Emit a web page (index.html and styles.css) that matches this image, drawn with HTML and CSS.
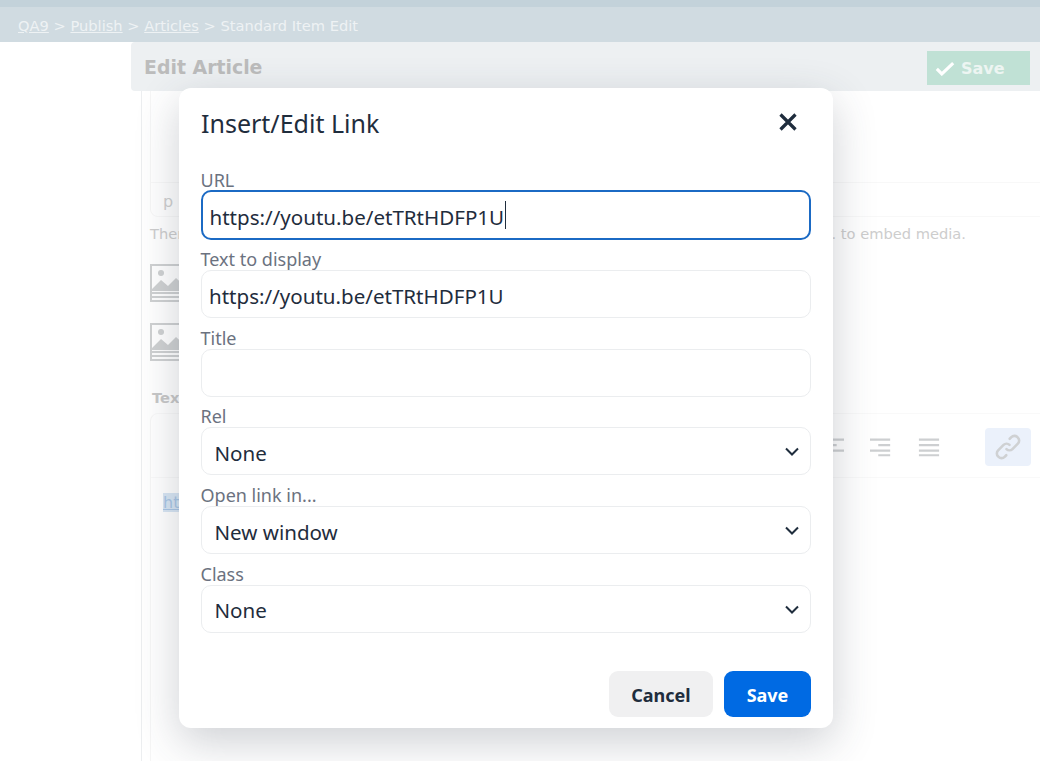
FILE: index.html
```html
<!DOCTYPE html>
<html lang="en">
<head>
<meta charset="utf-8">
<title>Insert/Edit Link</title>
<link rel="stylesheet" href="styles.css">
</head>
<body>
<div class="page">
  <div class="topbar"></div>
  <nav class="crumbs"><a>QA9</a> &gt; <a>Publish</a> &gt; <a>Articles</a> &gt; Standard Item Edit</nav>
  <div class="main">
    <header class="panel-head">
      <h1>Edit Article</h1>
      <div class="bg-save">
        <svg class="bg-check" viewBox="0 0 22 16"><path d="M2 8.5l5.5 5.5L20 2" fill="none" stroke="#fff" stroke-width="3.4"/></svg>
        <span>Save</span>
      </div>
    </header>
    <div class="panel-body">
      <div class="editor-one"><div class="edit-area"></div><div class="status"><span>p</span></div></div>
      <p class="hint"><span>There</span><span>. to embed media.</span></p>
      <div class="thumbs">
        <svg class="thumb" viewBox="0 0 40 40"><rect x="1" y="1" width="38" height="36" fill="none" stroke="#cfd1d2" stroke-width="2"/><circle cx="11" cy="9" r="3" fill="#cfd1d2"/><path d="M2 25l9-9 7 6 8-8 12 11v2H2z" fill="#cfd1d2"/><path d="M2 29h36M2 33h36" stroke="#cfd1d2" stroke-width="2"/></svg>
        <svg class="thumb" viewBox="0 0 40 40"><rect x="1" y="1" width="38" height="36" fill="none" stroke="#cfd1d2" stroke-width="2"/><circle cx="11" cy="9" r="3" fill="#cfd1d2"/><path d="M2 25l9-9 7 6 8-8 12 11v2H2z" fill="#cfd1d2"/><path d="M2 29h36M2 33h36" stroke="#cfd1d2" stroke-width="2"/></svg>
      </div>
      <div class="text-label">Text</div>
      <div class="editor-two">
        <div class="toolbar">
          <svg class="align" viewBox="0 0 24 20"><path d="M0 2h24M0 8h16M0 14h24M0 19h12" stroke="#cdcfd1" stroke-width="2.4"/></svg>
          <svg class="align" viewBox="0 0 24 20"><path d="M0 2h22M9 8h13M0 14h22M9 19h13" stroke="#cdcfd1" stroke-width="2.4"/></svg>
          <svg class="align" viewBox="0 0 24 20"><path d="M1 2h22M1 8h22M1 14h22M1 19h22" stroke="#cdcfd1" stroke-width="2.4"/></svg>
          <div class="link-btn">
            <svg viewBox="0 0 24 24" width="26" height="26" fill="none" stroke="#cfd1d3" stroke-width="2.4" stroke-linecap="round" stroke-linejoin="round"><path d="M13.6 4.4l1.5-1.5a3.9 3.9 0 0 1 5.6 0l.4.4a3.9 3.9 0 0 1 0 5.6l-5 5a3.9 3.9 0 0 1-5.5 0"/><path d="M10.4 19.6l-1.5 1.5a3.9 3.9 0 0 1-5.6 0l-.4-.4a3.9 3.9 0 0 1 0-5.6l5-5a3.9 3.9 0 0 1 5.5 0"/></svg>
          </div>
        </div>
        <div class="doc"><a>htt</a></div>
      </div>
    </div>
  </div>
</div>

<section class="modal">
  <div class="modal-head">
    <h2>Insert/Edit Link</h2>
    <svg class="close" viewBox="0 0 16 16"><path d="M2 2l12 12M14 2L2 14" fill="none" stroke="#1f2d3d" stroke-width="2.6"/></svg>
  </div>
  <form class="form">
    <div class="field"><label>URL</label><div class="input focus">https://youtu.be/etTRtHDFP1U<i class="caret"></i></div></div>
    <div class="field"><label>Text to display</label><div class="input">https://youtu.be/etTRtHDFP1U</div></div>
    <div class="field"><label>Title</label><div class="input"></div></div>
    <div class="field"><label>Rel</label><div class="input select">None<svg class="chev" viewBox="0 0 14 9"><path d="M1 1.5l6 6 6-6" fill="none" stroke="#1f2d3d" stroke-width="2"/></svg></div></div>
    <div class="field"><label>Open link in...</label><div class="input select">New window<svg class="chev" viewBox="0 0 14 9"><path d="M1 1.5l6 6 6-6" fill="none" stroke="#1f2d3d" stroke-width="2"/></svg></div></div>
    <div class="field"><label>Class</label><div class="input select">None<svg class="chev" viewBox="0 0 14 9"><path d="M1 1.5l6 6 6-6" fill="none" stroke="#1f2d3d" stroke-width="2"/></svg></div></div>
  </form>
  <div class="actions">
    <button class="btn cancel" type="button">Cancel</button>
    <button class="btn save" type="button">Save</button>
  </div>
</section>
</body>
</html>
```
FILE: styles.css
```css
html, body { margin: 0; height: 100%; overflow: hidden; background: #fff; }
body { font-family: "DejaVu Sans", sans-serif; width: 1040px; height: 761px; position: relative; }
.page { height: 761px; display: flex; flex-direction: column; }
.topbar { height: 7px; background: #c3d2da; }
.crumbs { height: 35px; box-sizing: border-box; padding: 9px 0 0 18px; background: #d0dbe1; color: #eef2f4; font-size: 14.65px; line-height: 20px; white-space: pre-wrap; }
.crumbs a { text-decoration: underline; }
.main { flex: 1; margin-left: 131px; display: flex; flex-direction: column; min-height: 0; }
.panel-head { height: 49px; box-sizing: border-box; background: #edf0f2; border-radius: 4px 0 0 4px; display: flex; justify-content: space-between; padding: 9px 10px 0 13px; }
.panel-head h1 { margin: 4px 0 0; font-size: 18.9px; line-height: 24px; font-weight: 700; color: #bcbcbc; }
.bg-save { width: 103px; height: 34px; background: #c0e1d5; color: #edf5f2; display: flex; align-items: center; gap: 6px; padding-left: 8px; box-sizing: border-box; font-weight: 700; font-size: 16px; }
.bg-check { width: 20px; height: 15px; }
.panel-body { flex: 1; margin-left: 10px; border-left: 1px solid #eceef0; padding-left: 8px; display: flex; flex-direction: column; min-height: 0; }
.editor-one { height: 125px; border-left: 1px solid #f6f6f6; border-bottom: 1px solid #f8f8f8; border-radius: 0 0 0 8px; display: flex; flex-direction: column; justify-content: flex-end; }
.status { height: 34px; border-top: 1px solid #f8f8f8; padding-left: 12px; box-sizing: border-box; color: #cfcfcf; font-size: 16px; line-height: 37px; }
.hint { margin: 7px 0 0; display: flex; justify-content: space-between; padding-right: 74px; font-size: 14.65px; line-height: 19px; color: #cdcdcd; }
.thumbs { margin-top: 21px; display: flex; flex-direction: column; gap: 19px; }
.thumb { width: 40px; height: 40px; display: block; }
.text-label { margin-top: 26px; margin-left: 2px; font-size: 14.65px; line-height: 18px; font-weight: 700; color: #c8c8c8; }
.editor-two { margin-top: 6px; flex: 1; border-left: 1px solid #f6f6f6; border-top: 1px solid #f9f9f9; border-radius: 8px 0 0 0; }
.toolbar { height: 64px; box-sizing: border-box; border-bottom: 1px solid #f9f9f9; display: flex; align-items: center; justify-content: flex-end; padding: 2px 9px 0 0; gap: 26px; }
.align { width: 22px; height: 20px; }
.link-btn { width: 46px; height: 38px; margin-left: 19px; background: #ebf1fb; border-radius: 4px; display: flex; align-items: center; justify-content: center; }
.doc { padding: 13px 0 0 12px; font-size: 16px; line-height: 24px; }
.doc a { color: #a9c6e6; background: #d8e6f4; text-decoration: underline; }

.modal { position: absolute; left: 179px; top: 88px; width: 654px; height: 640px; box-sizing: border-box; background: #fff; border-radius: 12px; padding: 0 22px; box-shadow: 0 14px 44px rgba(50, 60, 75, .24); font-family: "Noto Sans", sans-serif; color: #1f2d3d; display: flex; flex-direction: column; }
.modal-head { height: 80px; flex: none; display: flex; justify-content: space-between; align-items: flex-start; }
.modal-head h2 { margin: 17px 0 0; font-size: 25px; line-height: 36px; font-weight: 400; }
.close { width: 20px; height: 20px; margin: 24px 13px 0 0; }
.form { display: flex; flex-direction: column; gap: 1px; }
.field { display: flex; flex-direction: column; height: 77.75px; }
.field label { font-size: 18px; line-height: 24px; height: 23px; margin-left: -.5px; color: #6b7280; }
.input { height: 48px; flex: none; box-sizing: border-box; border: 1px solid #ebedef; border-radius: 10px; padding: 4px 0 0 7px; font-size: 20.55px; line-height: 30px; display: flex; align-items: center; }
.input.focus { border: 2px solid #1b6ac4; padding-left: 6.5px; height: 50px; margin-top: -1px; }
.caret { display: inline-block; width: 1px; height: 28px; background: #1f2d3d; margin: -4px 0 0 1px; }
.select { padding: 3px 11px 0 12.5px; justify-content: space-between; }
.chev { width: 14px; height: 9px; margin-top: -2px; }
.actions { margin-top: 31px; display: flex; justify-content: flex-end; gap: 11px; }
.btn { height: 46px; border: 0; border-radius: 9px; padding-top: 4px; font-family: "Noto Sans", sans-serif; font-size: 18px; font-weight: 700; }
.cancel { width: 104px; background: #f0f0f1; color: #1f2d3d; }
.save { width: 87px; background: #006ae3; color: #fff; }
```
